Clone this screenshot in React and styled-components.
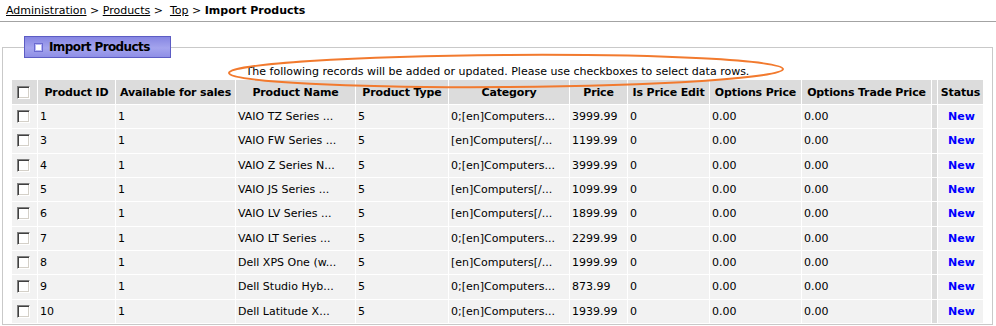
import React from "react"
import styled, { createGlobalStyle } from "styled-components"

const Global = createGlobalStyle`
  body {
    margin: 0;
    background: #fff;
    color: #000;
    font-family: "DejaVu Sans", Tahoma, Verdana, sans-serif;
    font-size: 11px;
  }
`

const Crumbs = styled.div`
  height: 21px;
  line-height: 21px;
  padding-left: 6px;
  border-bottom: 1px solid #a3a3a3;
  white-space: pre;
`
const Crumb = styled.a`
  color: #000;
  text-decoration: underline;
`
const Current = styled.b``

const Box = styled.fieldset`
  position: relative;
  margin: 14px 3px 0 2px;
  padding: 0 8px 0 8px;
  border: 1px solid #c9c9c9;
  min-width: 0;
`
const Legend = styled.legend`
  margin-left: 13px;
  padding: 0 0 0 10px;
  box-sizing: border-box;
  width: 147px;
  height: 22px;
  display: flex;
  align-items: center;
  gap: 7px;
  border: 1px solid #5c5cc4;
  background: linear-gradient(#8686e2, #a4a4ee 55%, #8e8ee6);
  font-size: 12px;
  font-weight: bold;
  letter-spacing: -0.6px;
`
const LegendIcon = styled.span`
  width: 5px;
  height: 5px;
  border: 1px solid #b8b8f4;
  background: #fff;
  box-shadow: 0 0 0 1px #6a6ad0;
`

const Message = styled.div`
  position: relative;
  margin-top: 6px;
  line-height: 15px;
  text-align: center;
`
const Ring = styled.svg`
  position: absolute;
  left: calc(50% - 282px);
  top: -13px;
  pointer-events: none;
`

const Table = styled.table`
  width: 973px;
  table-layout: fixed;
  border-collapse: separate;
  border-spacing: 1px;
`
const Head = styled.th`
  box-sizing: border-box;
  width: ${p => p.$w}px;
  height: 24px;
  padding: 0;
  background: #dcdcdc;
  font-weight: bold;
  letter-spacing: -0.15px;
  text-align: center;
  white-space: nowrap;
  overflow: hidden;
`
const Cell = styled.td`
  box-sizing: border-box;
  height: 23.33px;
  padding: 0 0 0 2px;
  background: ${p => (p.$gap ? "#dcdcdc" : "#f2f2f2")};
  text-align: ${p => (p.$center ? "center" : "left")};
  white-space: nowrap;
  overflow: hidden;
`
const CheckCell = styled(Cell)`
  width: 25px;
  padding-left: 5px;
  background: ${p => (p.$head ? "#dcdcdc" : "#f2f2f2")};
`
const Check = styled.span`
  display: block;
  box-sizing: border-box;
  width: 13px;
  height: 13px;
  background: #fff;
  border: 1px solid;
  border-color: #808080 #ffffff #ffffff #808080;
  box-shadow: inset 1px 1px #404040, inset -1px -1px #d4d0c8;
`
const Status = styled.a`
  color: #0000ff;
  font-weight: bold;
  text-decoration: none;
`

const columns = [
  ["Product ID", 77],
  ["Available for sales", 119],
  ["Product Name", 119],
  ["Product Type", 92],
  ["Category", 120],
  ["Price", 57],
  ["Is Price Edit", 81],
  ["Options Price", 91],
  ["Options Trade Price", 129],
]

const rows = [
  ["1", "VAIO TZ Series ...", "0;[en]Computers...", "3999.99"],
  ["3", "VAIO FW Series ...", "[en]Computers[/...", "1199.99"],
  ["4", "VAIO Z Series N...", "0;[en]Computers...", "3999.99"],
  ["5", "VAIO JS Series ...", "[en]Computers[/...", "1099.99"],
  ["6", "VAIO LV Series ...", "[en]Computers[/...", "1899.99"],
  ["7", "VAIO LT Series ...", "0;[en]Computers...", "2299.99"],
  ["8", "Dell XPS One (w...", "[en]Computers[/...", "1999.99"],
  ["9", "Dell Studio Hyb...", "0;[en]Computers...", "873.99"],
  ["10", "Dell Latitude X...", "0;[en]Computers...", "1939.99"],
]

export default function App() {
  return (
    <>
      <Global />
      <Crumbs>
        <Crumb href="#">Administration</Crumb>{" > "}
        <Crumb href="#">Products</Crumb>{" >  "}
        <Crumb href="#">Top</Crumb>{" > "}
        <Current>Import Products</Current>
      </Crumbs>
      <Box>
        <Legend>
          <LegendIcon />
          Import Products
        </Legend>
        <Message>
          The following records will be added or updated. Please use checkboxes to select data rows.
          <Ring width="580" height="40" viewBox="0 0 580 40">
            <ellipse
              cx="290"
              cy="20"
              rx="277"
              ry="16"
              fill="none"
              stroke="#f27a2e"
              strokeWidth="2"
              transform="rotate(-0.4 290 20)"
            />
          </Ring>
        </Message>
        <Table>
          <thead>
            <tr>
              <CheckCell as="th" $head>
                <Check />
              </CheckCell>
              {columns.map(([label, w]) => (
                <Head key={label} $w={w}>{label}</Head>
              ))}
              <Head $w={5} />
              <Head $w={45}>Status</Head>
            </tr>
          </thead>
          <tbody>
            {rows.map(([id, name, cat, price]) => (
              <tr key={id}>
                <CheckCell><Check /></CheckCell>
                <Cell>{id}</Cell>
                <Cell>1</Cell>
                <Cell>{name}</Cell>
                <Cell>5</Cell>
                <Cell>{cat}</Cell>
                <Cell>{price}</Cell>
                <Cell>0</Cell>
                <Cell>0.00</Cell>
                <Cell>0.00</Cell>
                <Cell $gap />
                <Cell $center><Status href="#">New</Status></Cell>
              </tr>
            ))}
          </tbody>
        </Table>
      </Box>
    </>
  )
}
